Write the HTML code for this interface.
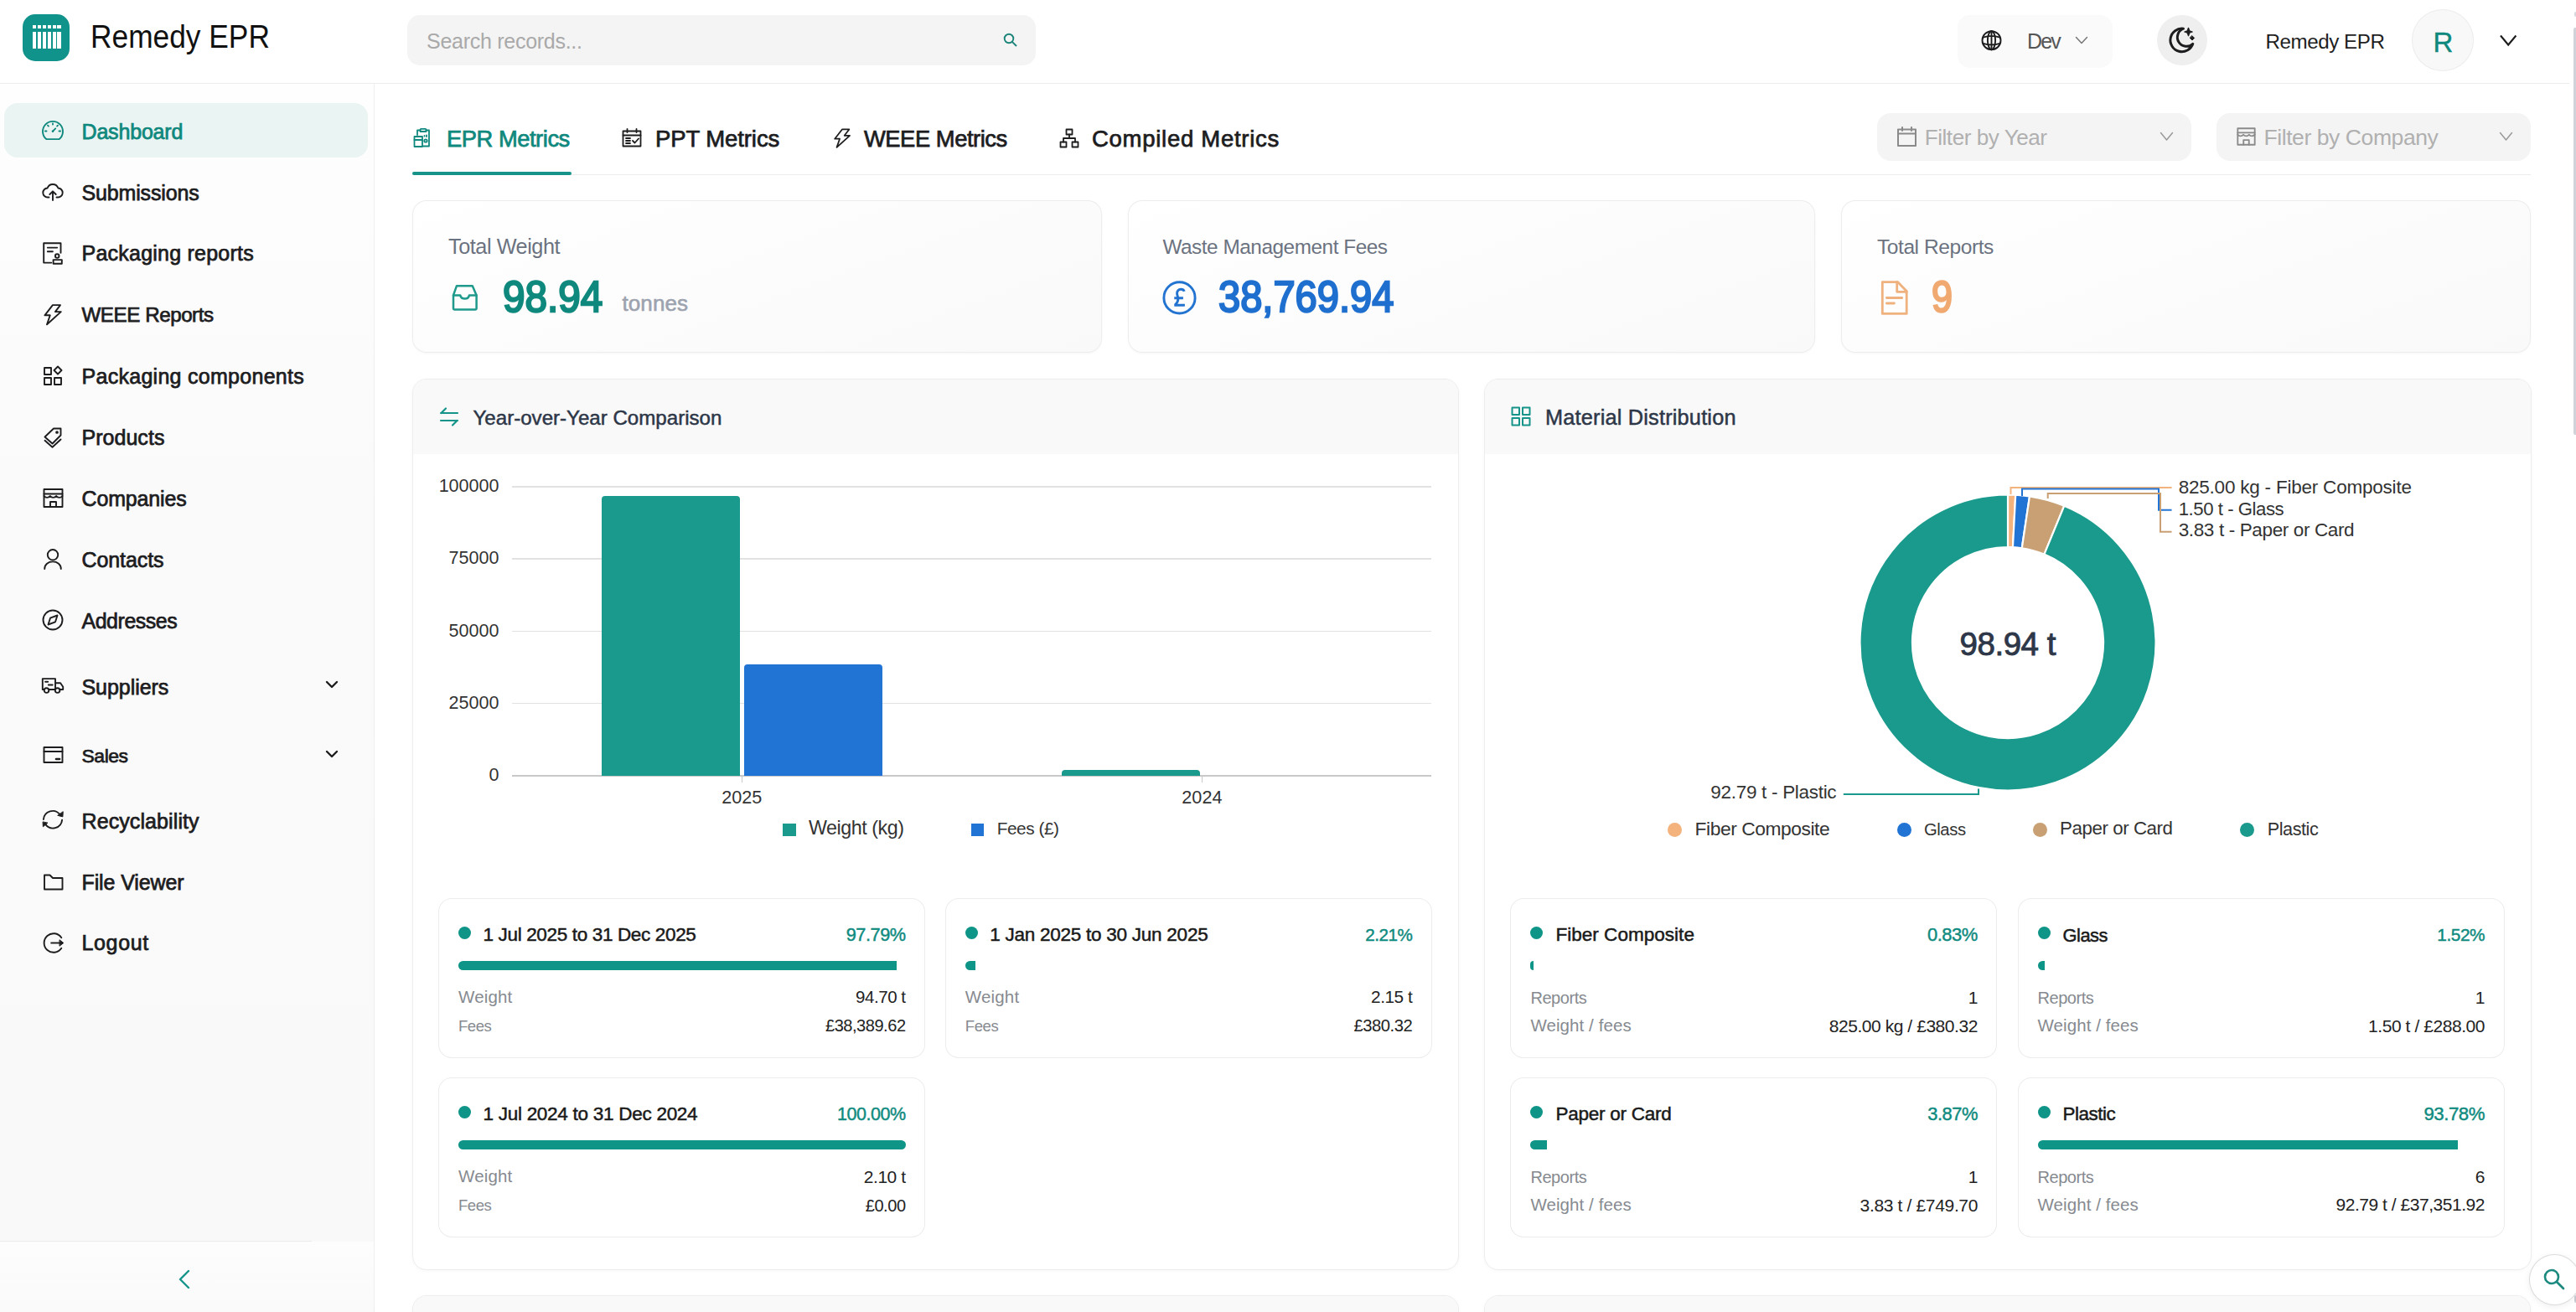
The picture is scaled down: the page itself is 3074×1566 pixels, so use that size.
<!DOCTYPE html>
<html><head><meta charset="utf-8"><style>
html,body{margin:0;padding:0;width:3074px;height:1566px;overflow:hidden;background:#fff;}
body{position:relative;font-family:"Liberation Sans",sans-serif;}
.t{position:absolute;white-space:nowrap;line-height:1;}
.r{position:absolute;}
svg.r{overflow:visible;}
</style></head><body>
<div class="r" style="left:0px;top:100px;width:446px;height:1382px;background:linear-gradient(#fefefe 0px,#fafafa 500px,#f9f9f9 1382px);"></div>
<div class="r" style="left:0px;top:1482px;width:446px;height:84px;background:linear-gradient(#fdfdfd,#fafafa);"></div>
<div class="r" style="left:0px;top:1481px;width:372px;height:1px;background:#ebebeb;"></div>
<div class="r" style="left:446px;top:100px;width:1px;height:1466px;background:#efefef;"></div>
<div class="r" style="left:0px;top:99px;width:3066px;height:1px;background:#ececec;"></div>
<div class="r" style="left:27px;top:17px;width:56px;height:56px;border-radius:15px;background:#10938a"></div>
<div class="r" style="left:38.9px;top:30px;width:4.399999999999999px;height:3.6000000000000014px;background:#fff;"></div>
<div class="r" style="left:38.9px;top:37.7px;width:4.399999999999999px;height:20.599999999999994px;background:#fff;"></div>
<div class="r" style="left:44.8px;top:30px;width:4.400000000000006px;height:3.6000000000000014px;background:#fff;"></div>
<div class="r" style="left:44.8px;top:37.7px;width:4.400000000000006px;height:20.599999999999994px;background:#fff;"></div>
<div class="r" style="left:50.7px;top:30px;width:4.399999999999999px;height:3.6000000000000014px;background:#fff;"></div>
<div class="r" style="left:50.7px;top:37.7px;width:4.399999999999999px;height:20.599999999999994px;background:#fff;"></div>
<div class="r" style="left:56.6px;top:30px;width:4.399999999999999px;height:3.6000000000000014px;background:#fff;"></div>
<div class="r" style="left:56.6px;top:37.7px;width:4.399999999999999px;height:20.599999999999994px;background:#fff;"></div>
<div class="r" style="left:62.5px;top:30px;width:4.400000000000006px;height:3.6000000000000014px;background:#fff;"></div>
<div class="r" style="left:62.5px;top:37.7px;width:4.400000000000006px;height:20.599999999999994px;background:#fff;"></div>
<div class="r" style="left:68.4px;top:30px;width:4.3999999999999915px;height:3.6000000000000014px;background:#fff;"></div>
<div class="r" style="left:68.4px;top:37.7px;width:4.3999999999999915px;height:20.599999999999994px;background:#fff;"></div>
<div class="t" style="top:25.39px;font-size:38.5px;color:#111;left:107.50px;transform:scaleX(0.9172);transform-origin:0 50%;">Remedy EPR</div>
<div class="r" style="left:486px;top:17.5px;width:750px;height:60.5px;border-radius:15px;background:#f4f4f4"></div>
<div class="t" style="top:37.22px;font-size:25px;color:#a9a9a9;letter-spacing:-0.273px;left:509.00px;">Search records...</div>
<svg class="r" style="left:1196px;top:37.5px;width:20px;height:20px;color:#1a8479" viewBox="0 0 20 20" fill="none" stroke="#1a8479" stroke-width="1.9" stroke-linecap="round" stroke-linejoin="round"><circle cx="8" cy="8" r="5.3"/><path d="M11.8 11.8l5.2 5.2" stroke-linecap="butt"/></svg>
<div class="r" style="left:2336px;top:18px;width:185px;height:63px;border-radius:15px;background:#fafafa"></div>
<svg class="r" style="left:2364px;top:36px;width:25px;height:25px;color:#1d1d1f" viewBox="0 0 25 25" fill="none" stroke="#1d1d1f" stroke-width="1.9" stroke-linecap="round" stroke-linejoin="round"><circle cx="12.5" cy="12.2" r="11"/><ellipse cx="12.5" cy="12.2" rx="4.6" ry="11"/><path d="M12.5 1.2v22M2.6 8.6Q12.5 5.2 22.4 8.6M2.6 15.8Q12.5 19.2 22.4 15.8"/></svg>
<div class="t" style="top:36.83px;font-size:25px;color:#555;letter-spacing:-1.9px;left:2419.00px;">Dev</div>
<svg class="r" style="left:2476px;top:43px;width:16px;height:10px;color:#777" viewBox="0 0 16 10" fill="none" stroke="#777" stroke-width="1.5" stroke-linecap="round" stroke-linejoin="round"><path d="M1.5 1.5L8 8.5L14.5 1.5"/></svg>
<div class="r" style="left:2573.5px;top:18px;width:60px;height:60px;border-radius:50%;background:#efefef"></div>
<svg class="r" style="left:2586px;top:31px;width:34px;height:34px;color:#1d1d1f" viewBox="0 0 34 34" fill="none" stroke="#1d1d1f" stroke-width="3" stroke-linecap="round" stroke-linejoin="round"><path d="M19.5 3.2A13.8 13.8 0 1 0 30.8 21.3A10.9 10.9 0 1 1 19.5 3.2Z"/><path d="M25.5 2.3l1.3 3.4 3.4 1.3-3.4 1.3-1.3 3.4-1.3-3.4-3.4-1.3 3.4-1.3z" fill="#1d1d1f" stroke-width="1.2"/><path d="M30 11.8l2.6 2.6-2.6 2.6-2.6-2.6z" fill="#1d1d1f" stroke-width="1"/></svg>
<div class="t" style="top:37.52px;font-size:24.18px;color:#1f1f1f;letter-spacing:-0.448px;left:2703.50px;">Remedy EPR</div>
<div class="r" style="left:2877.5px;top:10.5px;width:74px;height:74px;border-radius:50%;background:#f8f8f8;box-shadow:inset 0 0 0 1px #ededed"></div>
<div class="t" style="top:33.55px;font-size:33px;color:#0f887d;-webkit-text-stroke:0.4px #0f887d;left:2315.50px;width:1200px;text-align:center;">R</div>
<svg class="r" style="left:2982px;top:41px;width:22px;height:15px;color:#1d1d1f" viewBox="0 0 22 15" fill="none" stroke="#1d1d1f" stroke-width="2.1" stroke-linecap="round" stroke-linejoin="round"><path d="M2 1.5L11.2 12.5L20.4 1.5" stroke-linecap="butt" stroke-linejoin="miter"/></svg>
<div class="r" style="left:3071px;top:33px;width:3px;height:486px;background:#d0d3da;border-radius:2px 0 0 2px;"></div>
<div class="r" style="left:3072px;top:14px;width:2px;height:6px;background:#d6d8de;border-radius:2px 0 0 2px;"></div>
<div class="r" style="left:3071.5px;top:1546px;width:2.5px;height:9px;background:#c9ccd2;border-radius:3px 0 0 3px;"></div>
<div class="r" style="left:5px;top:123px;width:434px;height:64.5px;border-radius:16px;background:#eaf4f3"></div>
<div class="t" style="top:144.82px;font-size:25px;color:#0f887d;letter-spacing:-0.175px;-webkit-text-stroke:0.75px #0f887d;left:97.50px;">Dashboard</div>
<svg class="r" style="left:50px;top:143px;width:26px;height:26px;color:#0f887d" viewBox="0 0 26 26" fill="none" stroke="#0f887d" stroke-width="1.9" stroke-linecap="round" stroke-linejoin="round"><path d="M5.3 23.1A12 12 0 1 1 20.7 23.1Z"/><path d="M13 4.4V5.6M7 6.7L7.9 7.6M3.9 13.5H5.5M20.5 13.5H22.1M18.1 7.6L19 6.7M13 13.6L16.2 10.4"/><circle cx="13" cy="13.7" r="1.3" fill="currentColor" stroke="none"/></svg>
<div class="t" style="top:217.62px;font-size:25px;color:#1d1d1f;letter-spacing:-0.15px;-webkit-text-stroke:0.75px #1d1d1f;left:97.50px;">Submissions</div>
<svg class="r" style="left:50px;top:215.8px;width:26px;height:26px;color:#1d1d1f" viewBox="0 0 26 26" fill="none" stroke="#1d1d1f" stroke-width="1.9" stroke-linecap="round" stroke-linejoin="round"><path d="M8.5 19.5H7A5.5 5.5 0 0 1 6.6 8.5 6.8 6.8 0 0 1 19.4 8.5 5.5 5.5 0 0 1 19 19.5h-1.5"/><path d="M13 23V12.5M9.3 16L13 12.3 16.7 16"/></svg>
<div class="t" style="top:290.43px;font-size:25px;color:#1d1d1f;letter-spacing:0.234px;-webkit-text-stroke:0.75px #1d1d1f;left:97.50px;">Packaging reports</div>
<svg class="r" style="left:50px;top:288.6px;width:26px;height:26px;color:#1d1d1f" viewBox="0 0 26 26" fill="none" stroke="#1d1d1f" stroke-width="1.9" stroke-linecap="round" stroke-linejoin="round"><path d="M11.3 24.6H2.2V1.3H22.5V12.7"/><path d="M6.8 6.6h11.4M6.8 11.2h6.1"/><circle cx="18.2" cy="16.6" r="2.3"/><path d="M13.6 21.1h10.2v4.6H13.6z"/></svg>
<div class="t" style="top:364.32px;font-size:24.18px;color:#1d1d1f;letter-spacing:-0.451px;-webkit-text-stroke:0.75px #1d1d1f;left:97.50px;">WEEE Reports</div>
<svg class="r" style="left:50px;top:361.8px;width:26px;height:26px;color:#1d1d1f" viewBox="0 0 26 26" fill="none" stroke="#1d1d1f" stroke-width="1.9" stroke-linecap="round" stroke-linejoin="round"><path d="M12.9 2.1H22L15.9 10.1H22.8L6 25.3L9.8 14.3H3.4Z"/></svg>
<div class="t" style="top:436.52px;font-size:25px;color:#1d1d1f;letter-spacing:0.283px;-webkit-text-stroke:0.75px #1d1d1f;left:97.50px;">Packaging components</div>
<svg class="r" style="left:50px;top:434.7px;width:26px;height:26px;color:#1d1d1f" viewBox="0 0 26 26" fill="none" stroke="#1d1d1f" stroke-width="1.9" stroke-linecap="round" stroke-linejoin="round"><rect x="3" y="4" width="8" height="8"/><rect x="3" y="16" width="8" height="8"/><rect x="15" y="16" width="8" height="8"/><path d="M19 2.5l4.5 4.5-4.5 4.5-4.5-4.5z"/></svg>
<div class="t" style="top:510.03px;font-size:25px;color:#1d1d1f;letter-spacing:0.032px;-webkit-text-stroke:0.75px #1d1d1f;left:97.50px;">Products</div>
<svg class="r" style="left:50px;top:508.20000000000005px;width:26px;height:26px;color:#1d1d1f" viewBox="0 0 26 26" fill="none" stroke="#1d1d1f" stroke-width="1.9" stroke-linecap="round" stroke-linejoin="round"><path d="M3.5 13.5L14 3.5h8.5v8L12.5 21.5z"/><circle cx="18" cy="8" r="0.9" fill="currentColor"/><path d="M3.5 17.8l9 8 10-9.3"/></svg>
<div class="t" style="top:583.12px;font-size:25px;color:#1d1d1f;letter-spacing:-0.156px;-webkit-text-stroke:0.75px #1d1d1f;left:97.50px;">Companies</div>
<svg class="r" style="left:50px;top:581.3px;width:26px;height:26px;color:#1d1d1f" viewBox="0 0 26 26" fill="none" stroke="#1d1d1f" stroke-width="1.9" stroke-linecap="round" stroke-linejoin="round"><rect x="2.5" y="3" width="22" height="21"/><path d="M2.5 8.5h22"/><path d="M2.5 11c1.8 2.5 5.5 2.5 7.3 0 1.8 2.5 5.5 2.5 7.3 0 1.8 2.5 5.5 2.5 7.4 0"/><path d="M10 24v-6h7v6"/></svg>
<div class="t" style="top:655.83px;font-size:25px;color:#1d1d1f;letter-spacing:-0.096px;-webkit-text-stroke:0.75px #1d1d1f;left:97.50px;">Contacts</div>
<svg class="r" style="left:50px;top:654px;width:26px;height:26px;color:#1d1d1f" viewBox="0 0 26 26" fill="none" stroke="#1d1d1f" stroke-width="1.9" stroke-linecap="round" stroke-linejoin="round"><circle cx="13" cy="8.2" r="6.2"/><path d="M3.2 25C3.2 19.6 7.6 16.4 13 16.4S22.8 19.6 22.8 25"/></svg>
<div class="t" style="top:729.28px;font-size:24.94px;color:#1d1d1f;letter-spacing:-0.449px;-webkit-text-stroke:0.75px #1d1d1f;left:97.50px;">Addresses</div>
<svg class="r" style="left:50px;top:727.4px;width:26px;height:26px;color:#1d1d1f" viewBox="0 0 26 26" fill="none" stroke="#1d1d1f" stroke-width="1.9" stroke-linecap="round" stroke-linejoin="round"><circle cx="13" cy="13" r="11.5"/><path d="M18.5 7.5l-2.5 7.8-8.5 3.2 2.5-7.8z"/></svg>
<div class="t" style="top:807.53px;font-size:25px;color:#1d1d1f;letter-spacing:-0.05px;-webkit-text-stroke:0.75px #1d1d1f;left:97.50px;">Suppliers</div>
<svg class="r" style="left:50px;top:805.7px;width:26px;height:26px;color:#1d1d1f" viewBox="0 0 26 26" fill="none" stroke="#1d1d1f" stroke-width="1.9" stroke-linecap="round" stroke-linejoin="round"><path d="M2.7 17H0.8V4.1H16V15.5M8.3 17H15.8M16 9.2H22.1L25.2 13.8V17H21.4"/><circle cx="5.5" cy="18.1" r="2.8"/><circle cx="18.6" cy="18.1" r="2.8"/><path d="M4.1 7.7H7.2M7.8 11.5H12.7"/></svg>
<div class="t" style="top:891.47px;font-size:22.94px;color:#1d1d1f;letter-spacing:-0.45px;-webkit-text-stroke:0.75px #1d1d1f;left:97.50px;">Sales</div>
<svg class="r" style="left:50px;top:887.9px;width:26px;height:26px;color:#1d1d1f" viewBox="0 0 26 26" fill="none" stroke="#1d1d1f" stroke-width="1.9" stroke-linecap="round" stroke-linejoin="round"><rect x="2.5" y="4" width="22" height="18"/><path d="M2.5 9h22"/><path d="M17 18h4" stroke-width="2.6"/></svg>
<div class="t" style="top:967.83px;font-size:25px;color:#1d1d1f;letter-spacing:0.098px;-webkit-text-stroke:0.75px #1d1d1f;left:97.50px;">Recyclability</div>
<svg class="r" style="left:50px;top:966px;width:26px;height:26px;color:#1d1d1f" viewBox="0 0 26 26" fill="none" stroke="#1d1d1f" stroke-width="1.9" stroke-linecap="round" stroke-linejoin="round"><path d="M1.9 12A11 11 0 0 1 21.5 6.2"/><path d="M24.1 12.6A11 11 0 0 1 4.4 18.2"/><path d="M25.2 3.1L24.9 8.9L19.1 7.4Z" fill="currentColor" stroke-width="1"/><path d="M1.1 15.3L1.4 20.8L6.7 16.4Z" fill="currentColor" stroke-width="1"/></svg>
<div class="t" style="top:1040.53px;font-size:25px;color:#1d1d1f;letter-spacing:-0.12px;-webkit-text-stroke:0.75px #1d1d1f;left:97.50px;">File Viewer</div>
<svg class="r" style="left:50px;top:1038.7px;width:26px;height:26px;color:#1d1d1f" viewBox="0 0 26 26" fill="none" stroke="#1d1d1f" stroke-width="1.9" stroke-linecap="round" stroke-linejoin="round"><path d="M3 6V22.5h21.5V9H13L9.5 5.5H3z"/></svg>
<div class="t" style="top:1113.33px;font-size:25px;color:#1d1d1f;letter-spacing:0.65px;-webkit-text-stroke:0.75px #1d1d1f;left:97.50px;">Logout</div>
<svg class="r" style="left:50px;top:1111.5px;width:26px;height:26px;color:#1d1d1f" viewBox="0 0 26 26" fill="none" stroke="#1d1d1f" stroke-width="1.9" stroke-linecap="round" stroke-linejoin="round"><path d="M23.3 7.2A11.3 11.3 0 1 0 23.3 19.8"/><path d="M10.4 13.5H22" stroke-linecap="butt"/><path d="M21.3 10L25.8 13.5L21.3 17Z" fill="currentColor" stroke-width="1"/></svg>
<svg class="r" style="left:388px;top:811.5px;width:16px;height:11px;color:#1d1d1f" viewBox="0 0 16 11" fill="none" stroke="#1d1d1f" stroke-width="2.4" stroke-linecap="round" stroke-linejoin="round"><path d="M2 2l6 6 6-6"/></svg>
<svg class="r" style="left:388px;top:894.5px;width:16px;height:11px;color:#1d1d1f" viewBox="0 0 16 11" fill="none" stroke="#1d1d1f" stroke-width="2.4" stroke-linecap="round" stroke-linejoin="round"><path d="M2 2l6 6 6-6"/></svg>
<svg class="r" style="left:212px;top:1515px;width:16px;height:24px;color:#16948a" viewBox="0 0 16 24" fill="none" stroke="#16948a" stroke-width="2.4" stroke-linecap="round" stroke-linejoin="round"><path d="M13 2L3 12l10 10"/></svg>
<div class="r" style="left:492px;top:207.5px;width:2528px;height:1.5px;background:#ececec;"></div>
<div class="r" style="left:492px;top:205px;width:190px;height:4px;background:#16948a;border-radius:2px"></div>
<div class="t" style="top:152.06px;font-size:27.32px;color:#0f887d;letter-spacing:-0.451px;-webkit-text-stroke:0.75px #0f887d;left:533.00px;">EPR Metrics</div>
<svg class="r" style="left:493px;top:153px;width:24px;height:24px;color:#0f887d" viewBox="0 0 24 24" fill="none" stroke="#0f887d" stroke-width="1.8" stroke-linecap="round" stroke-linejoin="round"><path d="M5 8V2.5h3.5M15.5 2.5H19v19H12"/><path d="M8.5 4h7V1.8c0-.5-.4-1-1-1h-5c-.6 0-1 .5-1 1z"/><rect x="1.5" y="10" width="9.5" height="12"/><path d="M1.5 14h9.5"/><path d="M13.5 9v.5M16 8.5v1.5"/><circle cx="15" cy="15" r="1.7"/></svg>
<div class="t" style="top:151.91px;font-size:27.5px;color:#1d1d1f;letter-spacing:-0.094px;-webkit-text-stroke:0.75px #1d1d1f;left:782.00px;">PPT Metrics</div>
<svg class="r" style="left:742px;top:153px;width:24px;height:24px;color:#1d1d1f" viewBox="0 0 24 24" fill="none" stroke="#1d1d1f" stroke-width="1.8" stroke-linecap="round" stroke-linejoin="round"><rect x="1.5" y="3.5" width="21" height="18"/><path d="M1.5 8.5h21M6.5 1v4M17.5 1v4M5 12h5M5 15h5M5 18h5M13 15l2.5 2.5 4.5-5"/></svg>
<div class="t" style="top:152.04px;font-size:27.34px;color:#1d1d1f;letter-spacing:-0.451px;-webkit-text-stroke:0.75px #1d1d1f;left:1031.00px;">WEEE Metrics</div>
<svg class="r" style="left:993px;top:152px;width:24px;height:25px;color:#1d1d1f" viewBox="0 0 26 26" fill="none" stroke="#1d1d1f" stroke-width="1.9" stroke-linecap="round" stroke-linejoin="round"><path d="M12.9 2.1H22L15.9 10.1H22.8L6 25.3L9.8 14.3H3.4Z"/></svg>
<div class="t" style="top:151.91px;font-size:27.5px;color:#1d1d1f;letter-spacing:0.721px;-webkit-text-stroke:0.75px #1d1d1f;left:1303.00px;">Compiled Metrics</div>
<svg class="r" style="left:1264px;top:153px;width:24px;height:24px;color:#1d1d1f" viewBox="0 0 24 24" fill="none" stroke="#1d1d1f" stroke-width="1.8" stroke-linecap="round" stroke-linejoin="round"><rect x="8.5" y="1.5" width="7" height="6"/><rect x="1.5" y="16.5" width="7" height="6"/><rect x="15.5" y="16.5" width="7" height="6"/><path d="M12 7.5v4.5M5 16.5V12h14v4.5"/></svg>
<div class="r" style="left:2240px;top:134.5px;width:375px;height:57px;border-radius:16px;background:#f4f4f4"></div>
<div class="t" style="top:151.41px;font-size:26.08px;color:#b0b0b0;letter-spacing:-0.452px;left:2296.70px;">Filter by Year</div>
<svg class="r" style="left:2263px;top:151px;width:25px;height:25px;color:#8a8a8a" viewBox="0 0 25 25" fill="none" stroke="#8a8a8a" stroke-width="2" stroke-linecap="round" stroke-linejoin="round"><rect x="2" y="3.5" width="21" height="19.5"/><path d="M2 8.5h21M7 1v4M18 1v4"/></svg>
<svg class="r" style="left:2577px;top:157px;width:17px;height:12px;color:#9a9a9a" viewBox="0 0 17 12" fill="none" stroke="#9a9a9a" stroke-width="1.5" stroke-linecap="round" stroke-linejoin="round"><path d="M1.5 1.5l7 8.5 7-8.5"/></svg>
<div class="r" style="left:2645px;top:134.5px;width:375px;height:57px;border-radius:16px;background:#f4f4f4"></div>
<div class="t" style="top:151.00px;font-size:26.57px;color:#b0b0b0;letter-spacing:-0.451px;left:2701.50px;">Filter by Company</div>
<svg class="r" style="left:2668px;top:150px;width:25px;height:26px;color:#8a8a8a" viewBox="0 0 27 27" fill="none" stroke="#8a8a8a" stroke-width="2" stroke-linecap="round" stroke-linejoin="round"><rect x="2.5" y="3" width="22" height="21"/><path d="M2.5 8.5h22"/><path d="M2.5 11c1.8 2.5 5.5 2.5 7.3 0 1.8 2.5 5.5 2.5 7.3 0 1.8 2.5 5.5 2.5 7.4 0"/><path d="M10 24v-6h7v6"/></svg>
<svg class="r" style="left:2982px;top:157px;width:17px;height:12px;color:#9a9a9a" viewBox="0 0 17 12" fill="none" stroke="#9a9a9a" stroke-width="1.5" stroke-linecap="round" stroke-linejoin="round"><path d="M1.5 1.5l7 8.5 7-8.5"/></svg>
<div class="r card" style="left:492px;top:239px;width:823px;height:182px;border-radius:17px;background:linear-gradient(160deg,#ffffff,#f9f9f9);box-shadow:inset 0 0 0 1px #ededed,0 1px 3px rgba(0,0,0,0.04)"></div>
<div class="r card" style="left:1346px;top:239px;width:820px;height:182px;border-radius:17px;background:linear-gradient(160deg,#ffffff,#f9f9f9);box-shadow:inset 0 0 0 1px #ededed,0 1px 3px rgba(0,0,0,0.04)"></div>
<div class="r card" style="left:2197px;top:239px;width:823px;height:182px;border-radius:17px;background:linear-gradient(160deg,#ffffff,#f9f9f9);box-shadow:inset 0 0 0 1px #ededed,0 1px 3px rgba(0,0,0,0.04)"></div>
<div class="t" style="top:282.10px;font-size:25.26px;color:#6b7280;letter-spacing:-0.45px;left:535.00px;">Total Weight</div>
<svg class="r" style="left:538px;top:339px;width:33px;height:33px;color:#1e998c" viewBox="0 0 33 33" fill="none" stroke="#1e998c" stroke-width="2.5" stroke-linecap="round" stroke-linejoin="round"><path d="M3 13.4L7 2.2H25.8L30.6 13.4V29.2Q30.6 30.4 29.4 30.4H4.2Q3 30.4 3 29.2Z"/><path d="M3 13.4H11.2C11.8 16 13.6 17.6 16.8 17.6S21.4 16 22 13.4H30.6"/></svg>
<div class="t" style="top:327.53px;font-size:52.5px;color:#0f887d;-webkit-text-stroke:2.4px #0f887d;left:599.50px;transform:scaleX(0.9081);transform-origin:0 50%;">98.94</div>
<div class="t" style="top:348.98px;font-size:26px;color:#9ca3af;letter-spacing:0.094px;-webkit-text-stroke:0.6px #9ca3af;left:742.50px;">tonnes</div>
<div class="t" style="top:282.88px;font-size:24.34px;color:#6b7280;letter-spacing:-0.452px;left:1387.40px;">Waste Management Fees</div>
<svg class="r" style="left:1386px;top:334px;width:43px;height:43px;color:#2373d0" viewBox="0 0 43 43" fill="none" stroke="#2373d0" stroke-width="2.9" stroke-linecap="round" stroke-linejoin="round"><circle cx="21.5" cy="21.4" r="18.6"/><path d="M27.3 13.8C26.6 12.1 25.2 11.3 23.3 11.3C20.3 11.3 18.4 13.3 18.6 16.5C18.7 18.5 19.8 20.5 19.8 23C19.8 25.8 18.6 27.9 16.3 30" stroke-linecap="butt"/><path d="M15.3 21.7H25.9M15.3 30.3H27.9" stroke-linecap="butt"/></svg>
<div class="t" style="top:327.53px;font-size:52.5px;color:#1f6fcf;-webkit-text-stroke:2.4px #1f6fcf;left:1453.50px;transform:scaleX(0.8961);transform-origin:0 50%;">38,769.94</div>
<div class="t" style="top:282.69px;font-size:24.57px;color:#6b7280;letter-spacing:-0.451px;left:2240.00px;">Total Reports</div>
<svg class="r" style="left:2242px;top:334px;width:37px;height:43px;color:#efb17d" viewBox="0 0 37 43" fill="none" stroke="#efb17d" stroke-width="2.8" stroke-linecap="round" stroke-linejoin="round"><path d="M4.3 2.6H22.5L33.2 13.6V40.4H4.3Z"/><path d="M21.7 2.6V14.3H33.2"/><path d="M9.4 21.5H27.7M9.4 28H18.4"/></svg>
<div class="t" style="top:327.53px;font-size:52.5px;color:#f0a970;-webkit-text-stroke:2.4px #f0a970;left:2304.50px;transform:scaleX(0.8561);transform-origin:0 50%;">9</div>
<div class="r" style="left:492px;top:452px;width:1249px;height:1064px;box-sizing:border-box;border:1px solid #ededed;border-radius:17px;background:#fff;box-shadow:0 1px 4px rgba(0,0,0,0.035);overflow:hidden"><div style="position:absolute;left:0;top:0;right:0;height:88.5px;background:#f9f9f9"></div></div>
<div class="r" style="left:1771px;top:452px;width:1249.5px;height:1064px;box-sizing:border-box;border:1px solid #ededed;border-radius:17px;background:#fff;box-shadow:0 1px 4px rgba(0,0,0,0.035);overflow:hidden"><div style="position:absolute;left:0;top:0;right:0;height:88.5px;background:#f9f9f9"></div></div>
<div class="r" style="left:492px;top:1546px;width:1249px;height:154px;box-sizing:border-box;border:1px solid #ededed;border-radius:17px;background:#fff;box-shadow:0 1px 4px rgba(0,0,0,0.035);overflow:hidden"><div style="position:absolute;left:0;top:0;right:0;height:88.5px;background:#f9f9f9"></div></div>
<div class="r" style="left:1771px;top:1546px;width:1249px;height:154px;box-sizing:border-box;border:1px solid #ededed;border-radius:17px;background:#fff;box-shadow:0 1px 4px rgba(0,0,0,0.035);overflow:hidden"><div style="position:absolute;left:0;top:0;right:0;height:88.5px;background:#f9f9f9"></div></div>
<svg class="r" style="left:524px;top:486px;width:24px;height:23px;color:#16948a" viewBox="0 0 24 23" fill="none" stroke="#16948a" stroke-width="2.2" stroke-linecap="round" stroke-linejoin="round"><path d="M2 7h20M8 1.5L2.5 7M22 16H2M16 21.5l5.5-5.5"/></svg>
<div class="t" style="top:486.89px;font-size:24.1px;color:#2d3748;-webkit-text-stroke:0.5px #2d3748;left:564.50px;">Year-over-Year Comparison</div>
<svg class="r" style="left:1803px;top:485px;width:24px;height:24px;color:#16948a" viewBox="0 0 24 24" fill="none" stroke="#16948a" stroke-width="2" stroke-linecap="round" stroke-linejoin="round"><rect x="1.5" y="1.5" width="8.5" height="8.5"/><rect x="14" y="1.5" width="8.5" height="8.5"/><rect x="1.5" y="14" width="8.5" height="8.5"/><rect x="14" y="14" width="8.5" height="8.5"/></svg>
<div class="t" style="top:485.87px;font-size:25.3px;color:#2d3748;letter-spacing:0.199px;-webkit-text-stroke:0.5px #2d3748;left:1844.00px;">Material Distribution</div>
<div class="r" style="left:610.7px;top:580.2px;width:1097.8px;height:1.5px;background:#e2e2e2;"></div>
<div class="t" style="top:570.19px;font-size:21.5px;color:#333;left:-604.60px;width:1200px;text-align:right;">100000</div>
<div class="r" style="left:610.7px;top:666.4000000000001px;width:1097.8px;height:1.5px;background:#e2e2e2;"></div>
<div class="t" style="top:656.39px;font-size:21.5px;color:#333;left:-604.60px;width:1200px;text-align:right;">75000</div>
<div class="r" style="left:610.7px;top:752.6px;width:1097.8px;height:1.5px;background:#e2e2e2;"></div>
<div class="t" style="top:742.59px;font-size:21.5px;color:#333;left:-604.60px;width:1200px;text-align:right;">50000</div>
<div class="r" style="left:610.7px;top:838.8000000000001px;width:1097.8px;height:1.5px;background:#e2e2e2;"></div>
<div class="t" style="top:828.79px;font-size:21.5px;color:#333;left:-604.60px;width:1200px;text-align:right;">25000</div>
<div class="r" style="left:610.7px;top:925.0px;width:1097.8px;height:2.0px;background:#c9c9c9;"></div>
<div class="t" style="top:914.99px;font-size:21.5px;color:#333;left:-604.60px;width:1200px;text-align:right;">0</div>
<div class="r" style="left:717.6px;top:592.3px;width:165.19999999999993px;height:333.70000000000005px;background:#1a9a8c;border-radius:4px 4px 0 0"></div>
<div class="r" style="left:888.3px;top:792.8px;width:164.4000000000001px;height:133.20000000000005px;background:#2274d4;border-radius:4px 4px 0 0"></div>
<div class="r" style="left:1267px;top:919.4px;width:164.79999999999995px;height:6.600000000000023px;background:#1a9a8c;border-radius:4px 4px 0 0"></div>
<div class="r" style="left:884.5px;top:926px;width:1.2999999999999545px;height:8px;background:#c9c9c9;"></div>
<div class="r" style="left:1433.6px;top:926px;width:1.300000000000182px;height:8px;background:#c9c9c9;"></div>
<div class="t" style="top:940.50px;font-size:21.6px;color:#333;left:285.20px;width:1200px;text-align:center;">2025</div>
<div class="t" style="top:940.50px;font-size:21.6px;color:#333;left:834.40px;width:1200px;text-align:center;">2024</div>
<div class="r" style="left:934px;top:982.5px;width:16px;height:15.5px;background:#1a9a8c;"></div>
<div class="t" style="top:977.30px;font-size:23.26px;color:#333;letter-spacing:-0.451px;left:965.00px;">Weight (kg)</div>
<div class="r" style="left:1159px;top:982.5px;width:15px;height:15.5px;background:#2274d4;"></div>
<div class="t" style="top:979.39px;font-size:20.79px;color:#333;letter-spacing:-0.449px;left:1189.70px;">Fees (£)</div>
<div class="r" style="left:523px;top:1072px;width:581px;height:191px;border-radius:16px;background:#fff;box-shadow:inset 0 0 0 1px #ececec"></div>
<div class="r" style="left:547px;top:1106px;width:15px;height:15px;background:#0f9488;border-radius:50%"></div>
<div class="t" style="top:1104.54px;font-size:22.5px;color:#1a1a1a;letter-spacing:-0.349px;-webkit-text-stroke:0.5px #1a1a1a;left:576.50px;">1 Jul 2025 to 31 Dec 2025</div>
<div class="t" style="top:1105.24px;font-size:21.68px;color:#0f8b80;letter-spacing:-0.449px;-webkit-text-stroke:0.45px #0f8b80;left:-119.45px;width:1200px;text-align:right;">97.79%</div>
<div class="r" style="left:547px;top:1146.5px;width:523px;height:11.0px;background:#0f9488;border-radius:6px 0 0 6px"></div>
<div class="t" style="top:1179.84px;font-size:20.5px;color:#868a90;letter-spacing:0.17px;left:547.00px;">Weight</div>
<div class="t" style="top:1179.84px;font-size:20.49px;color:#222;letter-spacing:-0.45px;left:-119.45px;width:1200px;text-align:right;">94.70 t</div>
<div class="t" style="top:1215.50px;font-size:18.54px;color:#868a90;letter-spacing:-0.45px;left:547.00px;">Fees</div>
<div class="t" style="top:1214.25px;font-size:20.01px;color:#222;letter-spacing:-0.45px;left:-119.45px;width:1200px;text-align:right;">£38,389.62</div>
<div class="r" style="left:1127.8px;top:1072px;width:581.0px;height:191px;border-radius:16px;background:#fff;box-shadow:inset 0 0 0 1px #ececec"></div>
<div class="r" style="left:1151.8px;top:1106px;width:15.0px;height:15px;background:#0f9488;border-radius:50%"></div>
<div class="t" style="top:1104.54px;font-size:22.5px;color:#1a1a1a;letter-spacing:-0.255px;-webkit-text-stroke:0.5px #1a1a1a;left:1181.30px;">1 Jan 2025 to 30 Jun 2025</div>
<div class="t" style="top:1106.13px;font-size:20.62px;color:#0f8b80;letter-spacing:-0.452px;-webkit-text-stroke:0.45px #0f8b80;left:485.35px;width:1200px;text-align:right;">2.21%</div>
<div class="r" style="left:1151.8px;top:1146.5px;width:12.0px;height:11.0px;background:#0f9488;border-radius:6px 0 0 6px"></div>
<div class="t" style="top:1179.84px;font-size:20.5px;color:#868a90;letter-spacing:0.17px;left:1151.80px;">Weight</div>
<div class="t" style="top:1179.60px;font-size:20.78px;color:#222;letter-spacing:-0.45px;left:485.35px;width:1200px;text-align:right;">2.15 t</div>
<div class="t" style="top:1215.50px;font-size:18.54px;color:#868a90;letter-spacing:-0.45px;left:1151.80px;">Fees</div>
<div class="t" style="top:1214.10px;font-size:20.19px;color:#222;letter-spacing:-0.448px;left:485.35px;width:1200px;text-align:right;">£380.32</div>
<div class="r" style="left:523px;top:1286.3px;width:581px;height:191px;border-radius:16px;background:#fff;box-shadow:inset 0 0 0 1px #ececec"></div>
<div class="r" style="left:547px;top:1320.3px;width:15px;height:15.0px;background:#0f9488;border-radius:50%"></div>
<div class="t" style="top:1318.84px;font-size:22.5px;color:#1a1a1a;letter-spacing:-0.274px;-webkit-text-stroke:0.5px #1a1a1a;left:576.50px;">1 Jul 2024 to 31 Dec 2024</div>
<div class="t" style="top:1319.71px;font-size:21.48px;color:#0f8b80;letter-spacing:-0.449px;-webkit-text-stroke:0.45px #0f8b80;left:-119.45px;width:1200px;text-align:right;">100.00%</div>
<div class="r" style="left:547px;top:1360.8px;width:534px;height:11.0px;background:#0f9488;border-radius:6px"></div>
<div class="t" style="top:1394.14px;font-size:20.5px;color:#868a90;letter-spacing:0.17px;left:547.00px;">Weight</div>
<div class="t" style="top:1393.73px;font-size:20.98px;color:#222;letter-spacing:-0.45px;left:-119.45px;width:1200px;text-align:right;">2.10 t</div>
<div class="t" style="top:1429.80px;font-size:18.54px;color:#868a90;letter-spacing:-0.45px;left:547.00px;">Fees</div>
<div class="t" style="top:1428.56px;font-size:20.0px;color:#222;letter-spacing:-0.45px;left:-119.45px;width:1200px;text-align:right;">£0.00</div>
<div class="r" style="left:1802.4px;top:1072.4px;width:581.0px;height:191px;border-radius:16px;background:#fff;box-shadow:inset 0 0 0 1px #ececec"></div>
<div class="r" style="left:1826.4px;top:1106.4px;width:15.0px;height:15.0px;background:#0f9488;border-radius:50%"></div>
<div class="t" style="top:1104.94px;font-size:22.5px;color:#1a1a1a;letter-spacing:0.033px;-webkit-text-stroke:0.5px #1a1a1a;left:1856.40px;">Fiber Composite</div>
<div class="t" style="top:1105.40px;font-size:21.96px;color:#0f8b80;letter-spacing:-0.452px;-webkit-text-stroke:0.45px #0f8b80;left:1159.95px;width:1200px;text-align:right;">0.83%</div>
<div class="r" style="left:1826.4px;top:1146.9px;width:4.0px;height:11.0px;background:#0f9488;border-radius:6px 0 0 6px"></div>
<div class="t" style="top:1180.63px;font-size:20.03px;color:#868a90;letter-spacing:-0.451px;left:1826.40px;">Reports</div>
<div class="t" style="top:1179.81px;font-size:21px;color:#222;left:1160.40px;width:1200px;text-align:right;">1</div>
<div class="t" style="top:1214.24px;font-size:20.5px;color:#868a90;letter-spacing:0.082px;left:1826.40px;">Weight / fees</div>
<div class="t" style="top:1213.81px;font-size:21px;color:#222;letter-spacing:-0.447px;left:1159.95px;width:1200px;text-align:right;">825.00 kg / £380.32</div>
<div class="r" style="left:2407.5px;top:1072.4px;width:581.0px;height:191px;border-radius:16px;background:#fff;box-shadow:inset 0 0 0 1px #ececec"></div>
<div class="r" style="left:2431.5px;top:1106.4px;width:15.0px;height:15.0px;background:#0f9488;border-radius:50%"></div>
<div class="t" style="top:1105.50px;font-size:21.84px;color:#1a1a1a;letter-spacing:-0.45px;-webkit-text-stroke:0.5px #1a1a1a;left:2461.50px;">Glass</div>
<div class="t" style="top:1106.39px;font-size:20.79px;color:#0f8b80;letter-spacing:-0.447px;-webkit-text-stroke:0.45px #0f8b80;left:1765.05px;width:1200px;text-align:right;">1.52%</div>
<div class="r" style="left:2431.5px;top:1146.9px;width:8.0px;height:11.0px;background:#0f9488;border-radius:6px 0 0 6px"></div>
<div class="t" style="top:1180.63px;font-size:20.03px;color:#868a90;letter-spacing:-0.451px;left:2431.50px;">Reports</div>
<div class="t" style="top:1179.81px;font-size:21px;color:#222;left:1765.50px;width:1200px;text-align:right;">1</div>
<div class="t" style="top:1214.24px;font-size:20.5px;color:#868a90;letter-spacing:0.082px;left:2431.50px;">Weight / fees</div>
<div class="t" style="top:1213.81px;font-size:21px;color:#222;letter-spacing:-0.437px;left:1765.06px;width:1200px;text-align:right;">1.50 t / £288.00</div>
<div class="r" style="left:1802.4px;top:1286.3px;width:581.0px;height:191px;border-radius:16px;background:#fff;box-shadow:inset 0 0 0 1px #ececec"></div>
<div class="r" style="left:1826.4px;top:1320.3px;width:15.0px;height:15.0px;background:#0f9488;border-radius:50%"></div>
<div class="t" style="top:1318.84px;font-size:22.5px;color:#1a1a1a;letter-spacing:-0.25px;-webkit-text-stroke:0.5px #1a1a1a;left:1856.40px;">Paper or Card</div>
<div class="t" style="top:1319.36px;font-size:21.89px;color:#0f8b80;letter-spacing:-0.452px;-webkit-text-stroke:0.45px #0f8b80;left:1159.95px;width:1200px;text-align:right;">3.87%</div>
<div class="r" style="left:1826.4px;top:1360.8px;width:20.0px;height:11.0px;background:#0f9488;border-radius:6px 0 0 6px"></div>
<div class="t" style="top:1394.53px;font-size:20.03px;color:#868a90;letter-spacing:-0.451px;left:1826.40px;">Reports</div>
<div class="t" style="top:1393.71px;font-size:21px;color:#222;left:1160.40px;width:1200px;text-align:right;">1</div>
<div class="t" style="top:1428.14px;font-size:20.5px;color:#868a90;letter-spacing:0.082px;left:1826.40px;">Weight / fees</div>
<div class="t" style="top:1427.71px;font-size:21px;color:#222;letter-spacing:-0.343px;left:1160.06px;width:1200px;text-align:right;">3.83 t / £749.70</div>
<div class="r" style="left:2407.5px;top:1286.3px;width:581.0px;height:191px;border-radius:16px;background:#fff;box-shadow:inset 0 0 0 1px #ececec"></div>
<div class="r" style="left:2431.5px;top:1320.3px;width:15.0px;height:15.0px;background:#0f9488;border-radius:50%"></div>
<div class="t" style="top:1318.92px;font-size:22.41px;color:#1a1a1a;letter-spacing:-0.45px;-webkit-text-stroke:0.5px #1a1a1a;left:2461.50px;">Plastic</div>
<div class="t" style="top:1319.09px;font-size:22.21px;color:#0f8b80;letter-spacing:-0.448px;-webkit-text-stroke:0.45px #0f8b80;left:1765.05px;width:1200px;text-align:right;">93.78%</div>
<div class="r" style="left:2431.5px;top:1360.8px;width:501.0px;height:11.0px;background:#0f9488;border-radius:6px 0 0 6px"></div>
<div class="t" style="top:1394.53px;font-size:20.03px;color:#868a90;letter-spacing:-0.451px;left:2431.50px;">Reports</div>
<div class="t" style="top:1393.71px;font-size:21px;color:#222;left:1765.50px;width:1200px;text-align:right;">6</div>
<div class="t" style="top:1428.14px;font-size:20.5px;color:#868a90;letter-spacing:0.082px;left:2431.50px;">Weight / fees</div>
<div class="t" style="top:1427.74px;font-size:20.97px;color:#222;letter-spacing:-0.449px;left:1765.05px;width:1200px;text-align:right;">92.79 t / £37,351.92</div>
<svg class="r" style="left:0;top:0;width:3074px;height:1566px" viewBox="0 0 3074 1566" fill="none" stroke-width="2"><path d="M2396.00 590.50A176.5 176.5 0 0 1 2405.20 590.74L2401.94 653.15A114 114 0 0 0 2396.00 653.00Z" fill="#f4b27c" stroke="#fff" stroke-width="2.2"/><path d="M2405.20 590.74A176.5 176.5 0 0 1 2421.97 592.42L2412.77 654.24A114 114 0 0 0 2401.94 653.15Z" fill="#2274d4" stroke="#fff" stroke-width="2.2"/><path d="M2421.97 592.42A176.5 176.5 0 0 1 2463.24 603.81L2439.43 661.60A114 114 0 0 0 2412.77 654.24Z" fill="#c8a073" stroke="#fff" stroke-width="2.2"/><path d="M2463.24 603.81A176.5 176.5 0 1 1 2396.00 590.50L2396.00 653.00A114 114 0 1 0 2439.43 661.60Z" fill="#1a9a8c" stroke="#fff" stroke-width="2.2"/><path d="M2399.5 590 V582 H2591.5" stroke="#f4b27c"/><path d="M2413 592 V583.5 H2576 V608.8 H2591.5" stroke="#2274d4"/><path d="M2443.7 595 V589 H2578 V634.7 H2591.5" stroke="#c8a073"/><path d="M2361 941.5 V948 H2199.8" stroke="#1a9a8c"/></svg>
<div class="t" style="top:749.89px;font-size:38.5px;color:#2d3748;letter-spacing:-0.452px;-webkit-text-stroke:0.9px #2d3748;left:1795.77px;width:1200px;text-align:center;">98.94 t</div>
<div class="t" style="top:570.94px;font-size:22.5px;color:#333;letter-spacing:-0.217px;left:2599.70px;">825.00 kg - Fiber Composite</div>
<div class="t" style="top:596.71px;font-size:22.18px;color:#333;letter-spacing:-0.451px;left:2599.70px;">1.50 t - Glass</div>
<div class="t" style="top:622.44px;font-size:22.5px;color:#333;letter-spacing:-0.365px;left:2599.70px;">3.83 t - Paper or Card</div>
<div class="t" style="top:934.94px;font-size:22.5px;color:#333;letter-spacing:-0.302px;left:991.30px;width:1200px;text-align:right;">92.79 t - Plastic</div>
<div class="r" style="left:1989.6px;top:981.5px;width:17.0px;height:17.0px;background:#f4b27c;border-radius:50%"></div>
<div class="t" style="top:977.67px;font-size:22.82px;color:#333;letter-spacing:-0.449px;left:2022.60px;">Fiber Composite</div>
<div class="r" style="left:2263.5px;top:981.5px;width:17.0px;height:17.0px;background:#2274d4;border-radius:50%"></div>
<div class="t" style="top:979.83px;font-size:20.27px;color:#333;letter-spacing:-0.447px;left:2296.00px;">Glass</div>
<div class="r" style="left:2426px;top:981.5px;width:17px;height:17.0px;background:#c8a073;border-radius:50%"></div>
<div class="t" style="top:978.06px;font-size:22.36px;color:#333;letter-spacing:-0.452px;left:2458.00px;">Paper or Card</div>
<div class="r" style="left:2672.8px;top:981.5px;width:17.0px;height:17.0px;background:#1a9a8c;border-radius:50%"></div>
<div class="t" style="top:978.68px;font-size:21.63px;color:#333;letter-spacing:-0.45px;left:2705.80px;">Plastic</div>
<div class="r" style="left:3018.5px;top:1497.5px;width:59px;height:59px;border-radius:50%;background:#fff;box-shadow:0 0 0 1px #dcdcdc,0 2px 10px rgba(0,0,0,0.08)"></div>
<svg class="r" style="left:3034px;top:1512px;width:28px;height:28px;color:#1d8a80" viewBox="0 0 28 28" fill="none" stroke="#1d8a80" stroke-width="2.6" stroke-linecap="round" stroke-linejoin="round"><circle cx="11" cy="12" r="8"/><path d="M17 18l8 8"/></svg>
</body></html>
